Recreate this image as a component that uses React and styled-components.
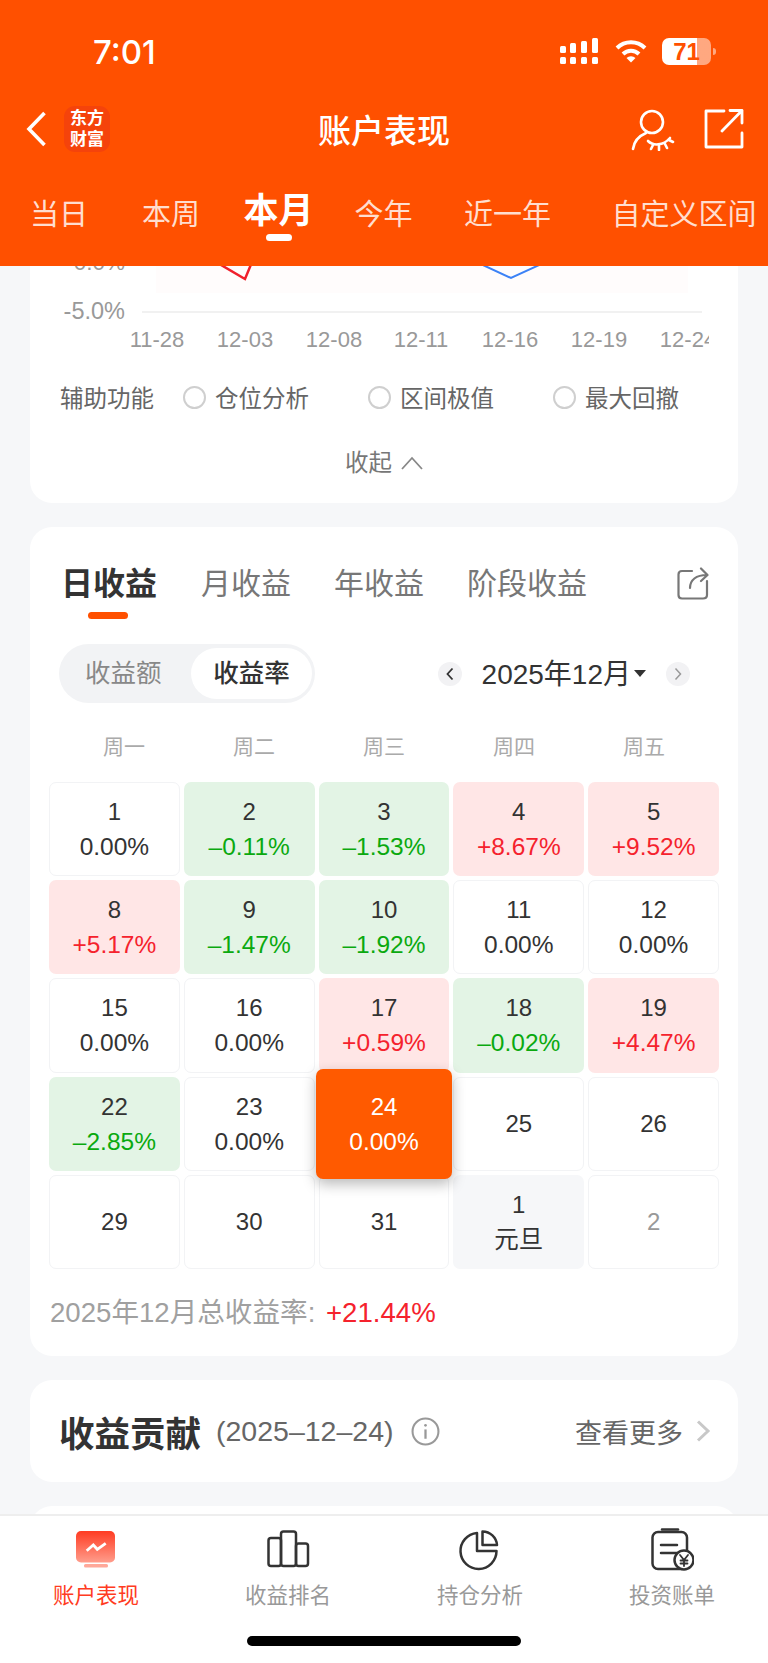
import React from "react";
import styled, { createGlobalStyle } from "styled-components";

const ORANGE = "#ff5000";
const RED = "#f5222d";
const GREEN = "#0aa90f";
const FONT = `"Liberation Sans", "Noto Sans CJK SC", sans-serif`;

const rangeTabs = [
  { label: "当日", gap: 0 },
  { label: "本周", gap: 54 },
  { label: "本月", gap: 43.5, active: true },
  { label: "今年", gap: 41 },
  { label: "近一年", gap: 51.5 },
  { label: "自定义区间", gap: 60.5 },
];

const weekdays = ["周一", "周二", "周三", "周四", "周五"];

const days = [
  { day: 1, value: "0.00%" },
  { day: 2, value: "–0.11%", tone: "down" },
  { day: 3, value: "–1.53%", tone: "down" },
  { day: 4, value: "+8.67%", tone: "up" },
  { day: 5, value: "+9.52%", tone: "up" },
  { day: 8, value: "+5.17%", tone: "up" },
  { day: 9, value: "–1.47%", tone: "down" },
  { day: 10, value: "–1.92%", tone: "down" },
  { day: 11, value: "0.00%" },
  { day: 12, value: "0.00%" },
  { day: 15, value: "0.00%" },
  { day: 16, value: "0.00%" },
  { day: 17, value: "+0.59%", tone: "up" },
  { day: 18, value: "–0.02%", tone: "down" },
  { day: 19, value: "+4.47%", tone: "up" },
  { day: 22, value: "–2.85%", tone: "down" },
  { day: 23, value: "0.00%" },
  { day: 24, value: "0.00%", tone: "selected" },
  { day: 25 },
  { day: 26 },
  { day: 29 },
  { day: 30 },
  { day: 31 },
  { day: 1, value: "元旦", tone: "holiday" },
  { day: 2, tone: "muted" },
];

const chartDates = [
  [157, "11-28"],
  [245, "12-03"],
  [334, "12-08"],
  [421, "12-11"],
  [510, "12-16"],
  [599, "12-19"],
  [688, "12-24"],
];

const App = () => {
  return (
    <>
      <GlobalStyle />
      <Page>
        <Header>
          <StatusBar>
            <Time>7:01</Time>
            <StatusIcons>
              <svg width="40" height="28" viewBox="0 0 40 28" fill="#fff">
                <rect x="0" y="20" width="6" height="7" rx="1.5" />
                <rect x="10" y="20" width="6" height="7" rx="1.5" />
                <rect x="21" y="20" width="6" height="7" rx="1.5" />
                <rect x="32" y="20" width="6" height="7" rx="1.5" />
                <rect x="0" y="9" width="6" height="7" rx="1.5" />
                <rect x="10" y="6" width="6" height="10" rx="1.5" />
                <rect x="21" y="4" width="6" height="12" rx="1.5" />
                <rect x="32" y="1" width="6" height="15" rx="1.5" />
              </svg>
              <svg width="32" height="24" viewBox="0 0 32 24" fill="none" stroke="#fff" strokeWidth="4">
                <path d="M2 9 A20 20 0 0 1 30 9" />
                <path d="M8 15 A11.5 11.5 0 0 1 24 15" />
                <path d="M16 23.5 L11.5 19 A6.5 6.5 0 0 1 20.5 19 Z" fill="#fff" stroke="none" />
              </svg>
              <Battery>71</Battery>
              <BatteryCap />
            </StatusIcons>
          </StatusBar>

          <NavBar>
            <NavLeft>
              <svg width="22" height="36" viewBox="0 0 22 36" fill="none" stroke="#fff" strokeWidth="3.6">
                <path d="M18.5 2 L3 18 L18.5 34" />
              </svg>
              <Logo>
                东方
                <br />
                财富
              </Logo>
            </NavLeft>
            <NavTitle>账户表现</NavTitle>
            <NavRight>
              <svg width="44" height="44" viewBox="0 0 44 44" fill="none" stroke="#fff" strokeWidth="2.6" strokeLinecap="round">
                <circle cx="21" cy="15" r="11" />
                <path d="M2 42 C3 34 8 29 15 26" />
                <path d="M17 34 C22 39 32 39 39 31" />
                <path d="M22 38 L20 42 M28 39 L28 43 M34 37 L36 41 M38 33 L42 35" />
              </svg>
              <svg width="40" height="40" viewBox="0 0 40 40" fill="none" stroke="#fff" strokeWidth="2.8" strokeLinecap="round" strokeLinejoin="round">
                <path d="M20 2 H2 V38 H38 V24" />
                <path d="M18 22 L38 1.5 M26 1.5 H38 V14" />
              </svg>
            </NavRight>
          </NavBar>

          <RangeTabs>
            {rangeTabs.map((tab) => (
              <RangeTab key={tab.label} $gap={tab.gap} $active={tab.active}>
                {tab.label}
              </RangeTab>
            ))}
          </RangeTabs>
        </Header>

        <Content>
          <ChartCard>
            <svg width="708" height="92" viewBox="0 0 708 92" style={{ display: "block" }}>
              <defs>
                <clipPath id="plot">
                  <rect x="0" y="0" width="679" height="92" />
                </clipPath>
              </defs>
              <rect x="126" y="0" width="532" height="27" fill="#fffcfc" />
              <line x1="112" y1="46" x2="672" y2="46" stroke="#f1f1f1" strokeWidth="2" />
              <path d="M186 -4 L215 13 L222 -4" fill="none" stroke="#f0202c" strokeWidth="2.5" />
              <path d="M442 -6 L481 12 L520 -6" fill="none" stroke="#3c82f6" strokeWidth="2" />
              <g fontFamily={FONT} fontSize="22" fill="#999">
                <text x="95" y="4" textAnchor="end" fontSize="22.5">0.0%</text>
                <text x="95" y="53" textAnchor="end" fontSize="23.5">-5.0%</text>
                <g clipPath="url(#plot)">
                  {chartDates.map(([x, label]) => (
                    <text key={label} x={x - 30} y="81" textAnchor="middle">
                      {label}
                    </text>
                  ))}
                </g>
              </g>
            </svg>

            <Options>
              <OptionsLabel>辅助功能</OptionsLabel>
              <OptionsList>
                {["仓位分析", "区间极值", "最大回撤"].map((option) => (
                  <Option key={option}>
                    <Radio />
                    {option}
                  </Option>
                ))}
              </OptionsList>
            </Options>

            <Collapse>
              收起
              <svg width="22" height="14" viewBox="0 0 22 14" fill="none" stroke="#888" strokeWidth="1.8">
                <path d="M1 13 L11 2 L21 13" />
              </svg>
            </Collapse>
          </ChartCard>

          <ReturnsCard>
            <ReturnsHead>
              <ReturnsTabs>
                <ReturnsTab $active>日收益</ReturnsTab>
                <ReturnsTab>月收益</ReturnsTab>
                <ReturnsTab>年收益</ReturnsTab>
                <ReturnsTab>阶段收益</ReturnsTab>
              </ReturnsTabs>
              <svg width="32" height="33" viewBox="0 0 32 33" fill="none" stroke="#777" strokeWidth="2.2" strokeLinecap="round" strokeLinejoin="round">
                <path d="M15 4 H5 Q1.5 4 1.5 7.5 V28 Q1.5 31.5 5 31.5 H26 Q30 31.5 30 28 V14" />
                <path d="M13 21 C13 13 19 8 30 8 M24 1.5 L30.5 8 L24 14" />
              </svg>
            </ReturnsHead>

            <Controls>
              <Segmented>
                <Segment>收益额</Segment>
                <Segment $active>收益率</Segment>
              </Segmented>
              <MonthPicker>
                <RoundButton>
                  <svg width="8" height="14" viewBox="0 0 8 14" fill="none" stroke="#333" strokeWidth="1.8">
                    <path d="M6.5 1.5 L1.5 7 L6.5 12.5" />
                  </svg>
                </RoundButton>
                <MonthLabel>2025年12月</MonthLabel>
                <Caret />
                <RoundButton $next>
                  <svg width="8" height="14" viewBox="0 0 8 14" fill="none" stroke="#999" strokeWidth="1.5">
                    <path d="M1.5 1.5 L6.5 7 L1.5 12.5" />
                  </svg>
                </RoundButton>
              </MonthPicker>
            </Controls>

            <Weekdays>
              {weekdays.map((day) => (
                <Weekday key={day}>{day}</Weekday>
              ))}
            </Weekdays>

            <Calendar>
              {days.map((cell, index) => (
                <DayCell key={index} $tone={cell.tone}>
                  <DayNumber $tone={cell.tone}>{cell.day}</DayNumber>
                  {cell.value && <DayValue $tone={cell.tone}>{cell.value}</DayValue>}
                </DayCell>
              ))}
            </Calendar>

            <Total>
              2025年12月总收益率: <TotalValue>+21.44%</TotalValue>
            </Total>
          </ReturnsCard>

          <ContributionCard>
            <ContributionTitle>收益贡献</ContributionTitle>
            <ContributionDate>(2025–12–24)</ContributionDate>
            <svg width="29" height="29" viewBox="0 0 28 28" fill="none" stroke="#999" strokeWidth="2">
              <circle cx="14" cy="14" r="12.5" />
              <path d="M14 12 V21" strokeWidth="2.2" />
              <circle cx="14" cy="8" r="1.3" fill="#999" stroke="none" />
            </svg>
            <MoreLink>
              查看更多
              <svg width="16" height="22" viewBox="0 0 16 22" fill="none" stroke="#c8c8c8" strokeWidth="3">
                <path d="M3 1.5 L13 11 L3 20.5" />
              </svg>
            </MoreLink>
          </ContributionCard>

          <NextCard />
        </Content>

        <BottomBar>
          <BottomTabs>
            <BottomTab $active>
              <svg width="44" height="44" viewBox="0 0 44 44">
                <defs>
                  <linearGradient id="perf" x1="0" y1="0" x2="0" y2="1">
                    <stop offset="0" stopColor="#ff3b22" />
                    <stop offset="1" stopColor="#ff9d8c" />
                  </linearGradient>
                </defs>
                <rect x="2" y="4" width="39" height="31.5" rx="5" fill="url(#perf)" />
                <rect x="10" y="37" width="24" height="3.5" rx="1.5" fill="#ffa899" />
                <path d="M12.7 23.7 L19.3 18 L23.3 22.3 L31.7 16.3" fill="none" stroke="#fff" strokeWidth="2.8" />
              </svg>
              账户表现
            </BottomTab>
            <BottomTab>
              <svg width="44" height="44" viewBox="0 0 44 44" fill="none" stroke="#333" strokeWidth="2.5" strokeLinejoin="round">
                <rect x="2.5" y="11" width="12.5" height="28" rx="2.5" />
                <rect x="15" y="4.5" width="15" height="34.5" rx="2.5" />
                <rect x="30" y="16.5" width="12" height="22.5" rx="2.5" />
              </svg>
              收益排名
            </BottomTab>
            <BottomTab>
              <svg width="44" height="44" viewBox="0 0 44 44" fill="none" stroke="#333" strokeWidth="2.5" strokeLinejoin="round">
                <path d="M19 6 A18 18 0 1 0 38.5 24 L19 24 Z" />
                <path d="M24.5 4.5 A14.5 14.5 0 0 1 39 18 L24.5 18 Z" />
              </svg>
              持仓分析
            </BottomTab>
            <BottomTab>
              <svg width="44" height="44" viewBox="0 0 44 44" fill="none" stroke="#333" strokeWidth="2.5" strokeLinecap="round">
                <rect x="2.5" y="5" width="34.5" height="37" rx="5.5" />
                <path d="M12 2.5 H28" strokeWidth="2.5" />
                <path d="M11 18 H27 M11 26 H28" />
                <circle cx="34" cy="33" r="9.5" fill="#fff" />
                <path d="M30 28 L34 33 L38 28 M34 33 V39 M30.5 33.5 H37.5 M30.5 36.5 H37.5" strokeWidth="1.8" />
              </svg>
              投资账单
            </BottomTab>
          </BottomTabs>
          <HomeIndicator />
        </BottomBar>
      </Page>
    </>
  );
};

const GlobalStyle = createGlobalStyle`
  html, body {
    margin: 0;
    padding: 0;
    font-family: ${FONT};
  }
  svg {
    flex-shrink: 0;
  }
`;

const Page = styled.div`
  display: flex;
  flex-direction: column;
  width: 768px;
  height: 100vh;
  overflow: hidden;
  background: #f6f7f9;
`;

const Header = styled.header`
  height: 266px;
  flex-shrink: 0;
  background: ${ORANGE};
  color: #fff;
`;

const StatusBar = styled.div`
  display: flex;
  align-items: flex-start;
  justify-content: space-between;
  height: 103px;
  padding: 34px 52px 0 93px;
  box-sizing: border-box;
`;

const Time = styled.div`
  font-family: Inter, sans-serif;
  font-size: 33px;
  font-weight: 500;
  line-height: 36px;
`;

const StatusIcons = styled.div`
  display: flex;
  align-items: center;
  margin-top: 3px;
  gap: 15px;
`;

const Battery = styled.div`
  width: 49px;
  height: 27px;
  border-radius: 7px;
  background: linear-gradient(90deg, #fff 0 71%, rgba(255, 255, 255, 0.5) 71% 100%);
  color: ${ORANGE};
  font-size: 24px;
  font-weight: 700;
  line-height: 27px;
  text-align: center;
`;

const BatteryCap = styled.div`
  width: 3px;
  height: 7px;
  margin-left: -13px;
  border-radius: 0 3px 3px 0;
  background: rgba(255, 255, 255, 0.5);
`;

const NavBar = styled.div`
  display: grid;
  grid-template-columns: 1fr auto 1fr;
  align-items: center;
  height: 51px;
`;

const NavLeft = styled.div`
  display: flex;
  align-items: center;
  gap: 16px;
  padding-left: 26px;
`;

const Logo = styled.div`
  width: 46px;
  height: 46px;
  border-radius: 11px;
  background: #f5430b;
  font-size: 17px;
  font-weight: 700;
  line-height: 21px;
  text-align: center;
  padding-top: 2px;
  box-sizing: border-box;
`;

const NavTitle = styled.div`
  font-size: 33px;
  font-weight: 500;
`;

const NavRight = styled.div`
  display: flex;
  justify-content: flex-end;
  align-items: center;
  gap: 29px;
  padding-right: 24px;
`;

const RangeTabs = styled.div`
  display: flex;
  align-items: center;
  height: 58px;
  margin-top: 29px;
  padding-left: 30px;
`;

const RangeTab = styled.div`
  position: relative;
  margin-left: ${(p) => p.$gap}px;
  font-size: ${(p) => (p.$active ? 35 : 29)}px;
  font-weight: ${(p) => (p.$active ? 700 : 400)};
  color: ${(p) => (p.$active ? "#fff" : "rgba(255, 255, 255, 0.82)")};
  white-space: nowrap;
  transform: ${(p) => (p.$active ? "translateY(-5px)" : "none")};

  ${(p) =>
    p.$active &&
    `&::after {
      content: "";
      position: absolute;
      left: 22px;
      bottom: -8px;
      width: 26px;
      height: 7px;
      border-radius: 4px;
      background: #fff;
    }`}
`;

const Content = styled.main`
  flex: 1;
  min-height: 0;
  overflow: hidden;
  display: flex;
  flex-direction: column;
  gap: 24px;
  padding: 0 30px;
`;

const Card = styled.section`
  flex-shrink: 0;
  background: #fff;
  border-radius: 22px;
`;

const ChartCard = styled(Card)`
  height: 237px;
  border-radius: 0 0 22px 22px;
`;

const Options = styled.div`
  display: flex;
  align-items: center;
  height: 32px;
  margin-top: 23px;
  padding-left: 30px;
  font-size: 23.5px;
  color: #666;
`;

const OptionsLabel = styled.div`
  width: 124px;
`;

const OptionsList = styled.div`
  display: grid;
  grid-template-columns: repeat(3, 185px);
`;

const Option = styled.div`
  display: flex;
  align-items: center;
  gap: 9px;
`;

const Radio = styled.span`
  width: 23px;
  height: 23px;
  box-sizing: border-box;
  border: 2px solid #cfcfcf;
  border-radius: 50%;
`;

const Collapse = styled.div`
  display: flex;
  justify-content: center;
  align-items: center;
  gap: 9px;
  margin-top: 33px;
  font-size: 23.5px;
  line-height: 34px;
  color: #777;
`;

const ReturnsCard = styled(Card)`
  height: 829px;
  padding-top: 34px;
  box-sizing: border-box;
`;

const ReturnsHead = styled.div`
  display: flex;
  justify-content: space-between;
  align-items: center;
  height: 44px;
  padding: 0 29px 0 31px;
`;

const ReturnsTabs = styled.div`
  display: flex;
  align-items: center;
  gap: 43px;
`;

const ReturnsTab = styled.div`
  position: relative;
  margin-right: ${(p) => (p.$active ? 1 : 0)}px;
  font-size: ${(p) => (p.$active ? 32 : 30)}px;
  line-height: 44px;
  font-weight: ${(p) => (p.$active ? 700 : 400)};
  color: ${(p) => (p.$active ? "#333" : "#777")};
  transform: translateY(1px);

  ${(p) =>
    p.$active &&
    `&::after {
      content: "";
      position: absolute;
      left: 27px;
      bottom: -13px;
      width: 40px;
      height: 7px;
      border-radius: 4px;
      background: ${ORANGE};
    }`}
`;

const Controls = styled.div`
  display: flex;
  justify-content: space-between;
  align-items: center;
  margin-top: 39px;
  padding: 0 48px 0 29px;
`;

const Segmented = styled.div`
  display: flex;
  align-items: center;
  justify-content: space-between;
  width: 256px;
  height: 59px;
  box-sizing: border-box;
  padding: 0 3px 0 26px;
  border-radius: 30px;
  background: #f2f3f5;
`;

const Segment = styled.div`
  width: ${(p) => (p.$active ? "121px" : "auto")};
  height: 51px;
  border-radius: 26px;
  background: ${(p) => (p.$active ? "#fff" : "transparent")};
  color: ${(p) => (p.$active ? "#333" : "#888")};
  font-size: 25.5px;
  font-weight: ${(p) => (p.$active ? 500 : 400)};
  line-height: 51px;
  text-align: center;
`;

const MonthPicker = styled.div`
  display: flex;
  align-items: center;
`;

const RoundButton = styled.div`
  display: grid;
  place-items: center;
  width: 24px;
  height: 24px;
  margin-left: ${(p) => (p.$next ? 20 : 0)}px;
  border-radius: 50%;
  background: #f2f2f4;
`;

const MonthLabel = styled.div`
  margin-left: 20px;
  padding-bottom: 4px;
  font-size: 28px;
  color: #333;
`;

const Caret = styled.span`
  width: 0;
  height: 0;
  margin-left: 3px;
  border-left: 6px solid transparent;
  border-right: 6px solid transparent;
  border-top: 7px solid #333;
`;

const Weekdays = styled.div`
  display: grid;
  grid-template-columns: repeat(5, 130px);
  margin-top: 29px;
  padding-left: 29px;
`;

const Weekday = styled.div`
  font-size: 21px;
  line-height: 30px;
  color: #aaa;
  text-align: center;
`;

const Calendar = styled.div`
  display: grid;
  grid-template-columns: repeat(5, 1fr);
  grid-auto-rows: 94.2px;
  gap: 4px;
  margin-top: 20px;
  padding: 0 19px;
`;

const cellBackground = {
  up: "#ffe6e6",
  down: "#e3f4e5",
  selected: "#ff5a00",
  holiday: "#f6f7f9",
};

const DayCell = styled.div`
  display: flex;
  flex-direction: column;
  justify-content: center;
  align-items: center;
  box-sizing: border-box;
  border-radius: 7px;
  background: ${(p) => cellBackground[p.$tone] || "#fff"};
  border: 1px solid ${(p) => (cellBackground[p.$tone] ? "transparent" : "#f2f3f5")};

  ${(p) =>
    p.$tone === "selected" &&
    `position: relative;
    z-index: 1;
    margin: -8px -3px;
    box-shadow: 0 5px 14px rgba(0, 0, 0, 0.28);`}
`;

const DayNumber = styled.div`
  font-size: 24px;
  line-height: 35px;
  color: ${(p) => (p.$tone === "selected" ? "#fff" : p.$tone === "muted" ? "#999" : "#333")};
`;

const valueColor = {
  up: RED,
  down: GREEN,
  selected: "#fff",
};

const DayValue = styled.div`
  font-size: 24.5px;
  line-height: 35px;
  color: ${(p) => valueColor[p.$tone] || "#333"};
`;

const Total = styled.div`
  margin-top: 26px;
  padding-left: 20px;
  font-size: 27.6px;
  line-height: 36px;
  color: #a0a0a0;
`;

const TotalValue = styled.span`
  margin-left: 3px;
  color: ${RED};
`;

const ContributionCard = styled(Card)`
  display: flex;
  align-items: center;
  height: 102px;
  padding: 0 27px 0 29px;
`;

const ContributionTitle = styled.div`
  font-size: 35.5px;
  font-weight: 700;
  color: #333;
`;

const ContributionDate = styled.div`
  margin: 0 17px 0 15px;
  font-size: 28.5px;
  color: #666;
`;

const MoreLink = styled.div`
  display: flex;
  align-items: center;
  gap: 12px;
  margin-left: auto;
  font-size: 27px;
  color: #666;
`;

const NextCard = styled(Card)`
  height: 60px;
`;

const BottomBar = styled.nav`
  display: flex;
  flex-direction: column;
  flex-shrink: 0;
  height: 149px;
  box-sizing: border-box;
  border-top: 2px solid #eee;
  background: #fff;
`;

const BottomTabs = styled.div`
  display: grid;
  grid-template-columns: repeat(4, 192px);
  padding-top: 11px;
`;

const BottomTab = styled.div`
  display: flex;
  flex-direction: column;
  align-items: center;
  gap: 9px;
  font-size: 21.5px;
  line-height: 32px;
  color: ${(p) => (p.$active ? "#ff3b22" : "#999")};
`;

const HomeIndicator = styled.div`
  width: 274px;
  height: 10px;
  margin: 24px auto 0;
  border-radius: 5px;
  background: #000;
`;

export default App;
